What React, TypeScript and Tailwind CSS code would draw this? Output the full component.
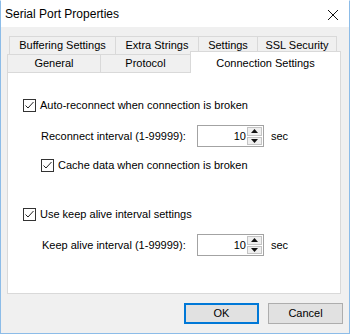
import React from "react";

const font = { fontFamily: '"Liberation Sans", Arial, sans-serif' };

function CheckBox({ label }: { label: string }) {
    return (
        <div className="flex h-[13px] items-center">
            <div className="flex h-[13px] w-[13px] items-center justify-center border border-[#333333] bg-white">
                <svg width="11" height="11" viewBox="0 0 11 11">
                    <polyline points="1.5,5.5 4,8 9.5,2" fill="none" stroke="#222222" strokeWidth="1" />
                </svg>
            </div>
            <span className="ml-[4px] text-[11px] leading-none text-black">{label}</span>
        </div>
    );
}

function SpinBox({ label, value, labelWidth }: { label: string; value: string; labelWidth: string }) {
    return (
        <div className="flex h-[22px] items-center">
            <span className={`${labelWidth} text-[11px] text-black`}>{label}</span>
            <div className="flex h-[22px] w-[67px] items-stretch border border-[#a3a3a3] bg-white">
                <div className="flex flex-1 items-center justify-end pr-[1px] text-[11px] text-black">{value}</div>
                <div className="flex w-[16px] flex-col gap-[1px] p-[1px] pl-0">
                    <div className="flex flex-1 items-center justify-center border border-[#c4c4c4] bg-[#efefef]">
                        <svg width="7" height="4" viewBox="0 0 7 4">
                            <polygon points="0,4 7,4 3.5,0" fill="#111" />
                        </svg>
                    </div>
                    <div className="flex flex-1 items-center justify-center border border-[#c4c4c4] bg-[#efefef]">
                        <svg width="7" height="4" viewBox="0 0 7 4">
                            <polygon points="0,0 7,0 3.5,4" fill="#111" />
                        </svg>
                    </div>
                </div>
            </div>
            <span className="ml-[7px] text-[11px] text-black">sec</span>
        </div>
    );
}

export default function App() {
    const backTabs = [
        { name: "Buffering Settings", w: "w-[106px]" },
        { name: "Extra Strings", w: "w-[83px]" },
        { name: "Settings", w: "w-[59px]" },
        { name: "SSL Security", w: "w-[80px]" },
    ];

    return (
        <div className="flex h-[334px] w-[350px] flex-col border border-[#8cbce8] border-t-white bg-[#f0f0f0]" style={font}>
            {/* title bar */}
            <div className="flex h-[26px] items-center justify-between bg-white pl-[4px] pr-[10px]">
                <span className="text-[12px] text-black">Serial Port Properties</span>
                <svg width="12" height="12" viewBox="0 0 12 12" className="mt-[1px]">
                    <line x1="1" y1="1" x2="11" y2="11" stroke="#111" strokeWidth="1" />
                    <line x1="11" y1="1" x2="1" y2="11" stroke="#111" strokeWidth="1" />
                </svg>
            </div>

            {/* tabs */}
            <div className="mt-[9px] flex flex-col">
                <div className="ml-[8px] flex h-[18px]">
                    {backTabs.map((tab, i) => (
                        <div
                            key={tab.name}
                            className={`${tab.w} flex items-center justify-center border-t border-l border-[#d9d9d9] text-[11px] text-black ${
                                i === backTabs.length - 1 ? "border-r" : ""
                            }`}
                        >
                            {tab.name}
                        </div>
                    ))}
                </div>
                <div className="ml-[6px] flex h-[18px] items-end">
                    <div className="flex h-[18px] w-[93px] items-center justify-center border-t border-l border-[#d9d9d9] text-[11px] text-black">
                        General
                    </div>
                    <div className="flex h-[18px] w-[90px] items-center justify-center border-t border-l border-[#d9d9d9] text-[11px] text-black">
                        Protocol
                    </div>
                    <div className="relative z-10 -mb-px flex h-[22px] w-[151px] items-start justify-center border-t border-l border-r border-[#d9d9d9] bg-white pt-[3px] text-[11px] text-black">
                        Connection Settings
                    </div>
                </div>

                {/* panel */}
                <div className="ml-[6px] flex h-[222px] w-[334px] flex-col border border-[#d9d9d9] bg-white">
                    <div className="ml-[15px] mt-[26px]">
                        <CheckBox label="Auto-reconnect when connection is broken" />
                    </div>
                    <div className="ml-[33px] mt-[13px]">
                        <SpinBox label="Reconnect interval (1-99999):" value="10" labelWidth="w-[156px]" />
                    </div>
                    <div className="ml-[33px] mt-[12px]">
                        <CheckBox label="Cache data when connection is broken" />
                    </div>
                    <div className="ml-[15px] mt-[36px]">
                        <CheckBox label="Use keep alive interval settings" />
                    </div>
                    <div className="ml-[34px] mt-[13px]">
                        <SpinBox label="Keep alive interval (1-99999):" value="10" labelWidth="w-[155px]" />
                    </div>
                </div>
            </div>

            {/* buttons */}
            <div className="mr-[6px] mt-[9px] flex justify-end gap-[9px]">
                <button className="h-[21px] w-[75px] border-2 border-[#0078d7] bg-[#e1e1e1] text-[11px] text-black">
                    OK
                </button>
                <button className="h-[21px] w-[75px] border border-[#adadad] bg-[#e1e1e1] text-[11px] text-black">
                    Cancel
                </button>
            </div>
        </div>
    );
}
